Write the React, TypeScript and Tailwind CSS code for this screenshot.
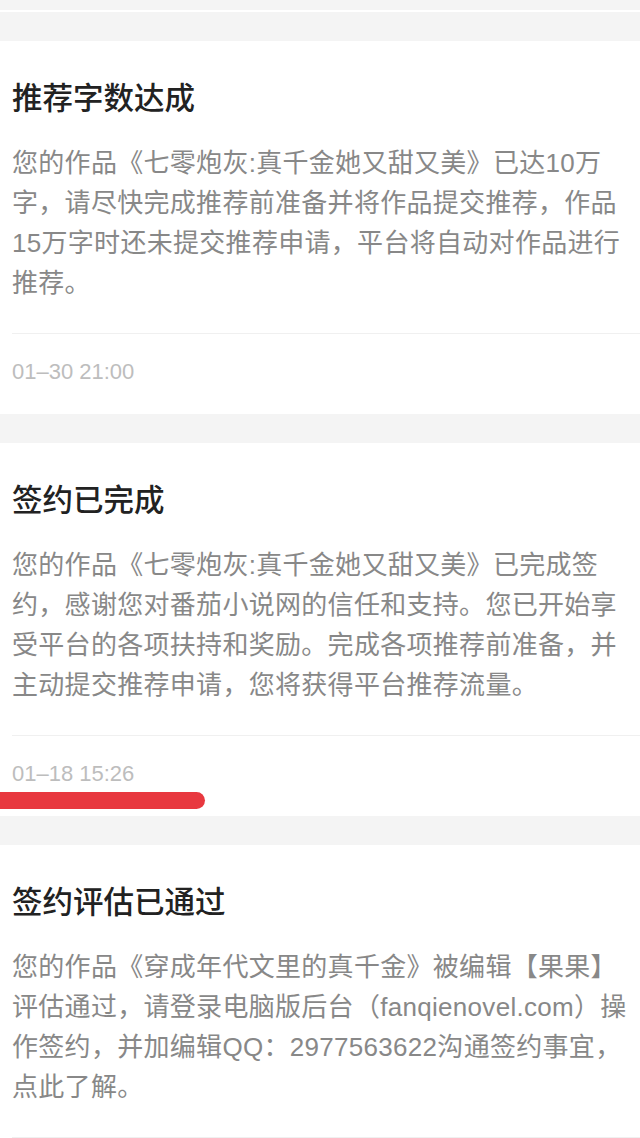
import React from "react";

type Card = { title: string; lines: string[]; time?: string; mark?: boolean };

const cards: Card[] = [
  {
    title: "推荐字数达成",
    lines: [
      "您的作品《七零炮灰:真千金她又甜又美》已达10万",
      "字，请尽快完成推荐前准备并将作品提交推荐，作品",
      "15万字时还未提交推荐申请，平台将自动对作品进行",
      "推荐。",
    ],
    time: "01–30 21:00",
  },
  {
    title: "签约已完成",
    lines: [
      "您的作品《七零炮灰:真千金她又甜又美》已完成签",
      "约，感谢您对番茄小说网的信任和支持。您已开始享",
      "受平台的各项扶持和奖励。完成各项推荐前准备，并",
      "主动提交推荐申请，您将获得平台推荐流量。",
    ],
    time: "01–18 15:26",
    mark: true,
  },
  {
    title: "签约评估已通过",
    lines: [
      "您的作品《穿成年代文里的真千金》被编辑【果果】",
      "评估通过，请登录电脑版后台（fanqienovel.com）操",
      "作签约，并加编辑QQ：2977563622沟通签约事宜，",
      "点此了解。",
    ],
  },
];

export default function App() {
  return (
    <div className="h-[1138px] w-[640px] overflow-hidden bg-[#f4f4f4] font-['Liberation_Sans','Noto_Sans_CJK_SC',sans-serif]">
      <div className="h-[10px]" />
      <div className="h-[2px] bg-white" />
      <div className="flex flex-col gap-[29px] pt-[29px]">
        {cards.map((c, i) => (
          <div key={i} className="relative bg-white">
            <div className="px-3 pt-[37px]">
              <div className="text-[30.5px] leading-[40px] font-medium text-[#222222] whitespace-nowrap">
                {c.title}
              </div>
              <div className="mt-[25px] text-[26px] leading-[40px] tracking-[0.3px] text-[#888888]">
                {c.lines.map((l, j) => (
                  <div key={j} className="whitespace-nowrap">
                    {l}
                  </div>
                ))}
              </div>
            </div>
            <div className="ml-3 mt-[30px] h-px bg-[#f0f0f0]" />
            {c.time && (
              <div className="px-3 pt-[24px] pb-[28px] text-[22px] leading-[28px] text-[#bdbdbd]">
                {c.time}
              </div>
            )}
            {c.mark && (
              <div className="absolute left-0 top-[349px] h-[17px] w-[205px] rounded-r-full bg-[#e8383f]" />
            )}
          </div>
        ))}
      </div>
    </div>
  );
}
